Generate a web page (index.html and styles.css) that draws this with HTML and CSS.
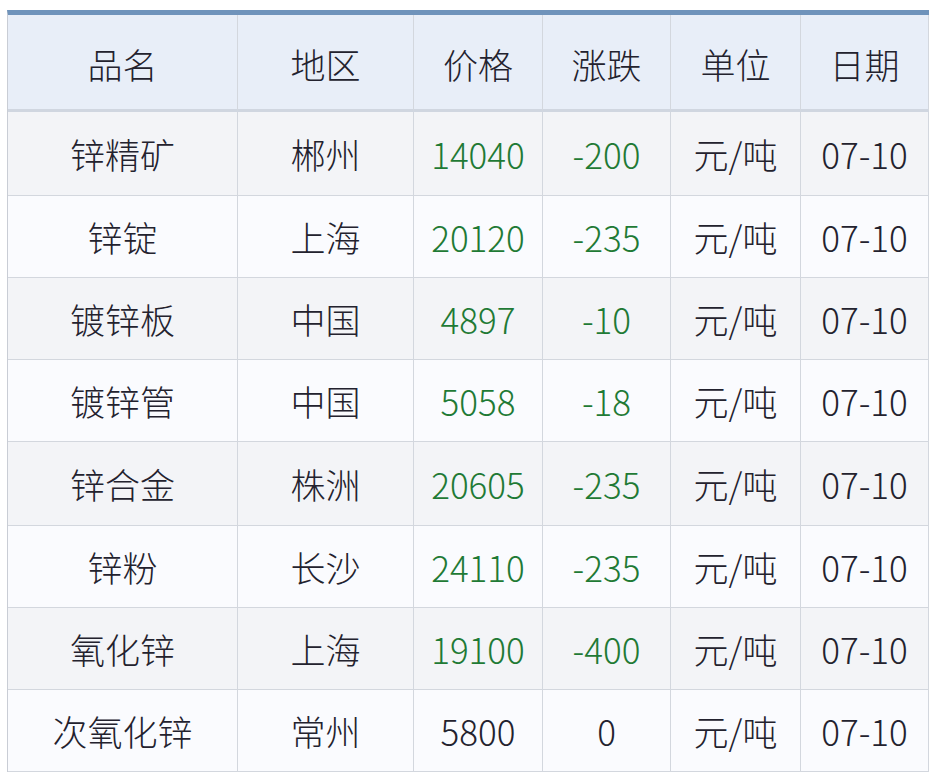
FILE: index.html
```html
<!DOCTYPE html>
<html lang="zh">
<head>
<meta charset="utf-8">
<link rel="stylesheet" href="styles.css">
</head>
<body>
<table class="price-table">
  <colgroup>
    <col class="c1"><col class="c2"><col class="c3"><col class="c4"><col class="c5"><col class="c6">
  </colgroup>
  <thead>
    <tr><th>品名</th><th>地区</th><th>价格</th><th>涨跌</th><th>单位</th><th>日期</th></tr>
  </thead>
  <tbody>
    <tr class="odd r1"><td>锌精矿</td><td>郴州</td><td class="g">14040</td><td class="g">-200</td><td>元/吨</td><td>07-10</td></tr>
    <tr class="even"><td>锌锭</td><td>上海</td><td class="g">20120</td><td class="g">-235</td><td>元/吨</td><td>07-10</td></tr>
    <tr class="odd"><td>镀锌板</td><td>中国</td><td class="g">4897</td><td class="g">-10</td><td>元/吨</td><td>07-10</td></tr>
    <tr class="even"><td>镀锌管</td><td>中国</td><td class="g">5058</td><td class="g">-18</td><td>元/吨</td><td>07-10</td></tr>
    <tr class="odd r5"><td>锌合金</td><td>株洲</td><td class="g">20605</td><td class="g">-235</td><td>元/吨</td><td>07-10</td></tr>
    <tr class="even"><td>锌粉</td><td>长沙</td><td class="g">24110</td><td class="g">-235</td><td>元/吨</td><td>07-10</td></tr>
    <tr class="odd"><td>氧化锌</td><td>上海</td><td class="g">19100</td><td class="g">-400</td><td>元/吨</td><td>07-10</td></tr>
    <tr class="even"><td>次氧化锌</td><td>常州</td><td>5800</td><td>0</td><td>元/吨</td><td>07-10</td></tr>
  </tbody>
</table>
</body>
</html>
```

FILE: styles.css
```css
html, body {
  margin: 0;
  padding: 0;
  background: #ffffff;
}
body {
  padding: 10px 0 0 7px;
  font-family: "Noto Sans CJK SC", "Noto Sans", sans-serif;
}
.price-table {
  border-collapse: separate;
  border-spacing: 0;
  width: 921px;
  table-layout: fixed;
  border-top: 5px solid #6f93bb;
  border-left: 1px solid #c9cdd5;
  font-size: 35px;
  color: #23222e;
}
.c1 { width: 230px; }
.c2 { width: 176px; }
.c3 { width: 129px; }
.c4 { width: 128px; }
.c5 { width: 130px; }
.c6 { width: 128px; }
th, td {
  text-align: center;
  vertical-align: middle;
  padding: 0;
  border-right: 1px solid #d3d7de;
  border-bottom: 1px solid #d3d7de;
  font-weight: 300;
  line-height: 40px;
  white-space: nowrap;
}
th {
  height: 90px;
  background: #e8eef8;
  border-bottom: 3px solid #d0d6e0;
  padding-top: 4px;
}
td {
  height: 81px;
}
tr.r1 td { height: 83px; }
tr.r5 td { height: 83px; }
tr.odd td { background: #f3f4f7; }
tr.even td { background: #fafbfe; }
td.g { color: #1f7a35; }
```
